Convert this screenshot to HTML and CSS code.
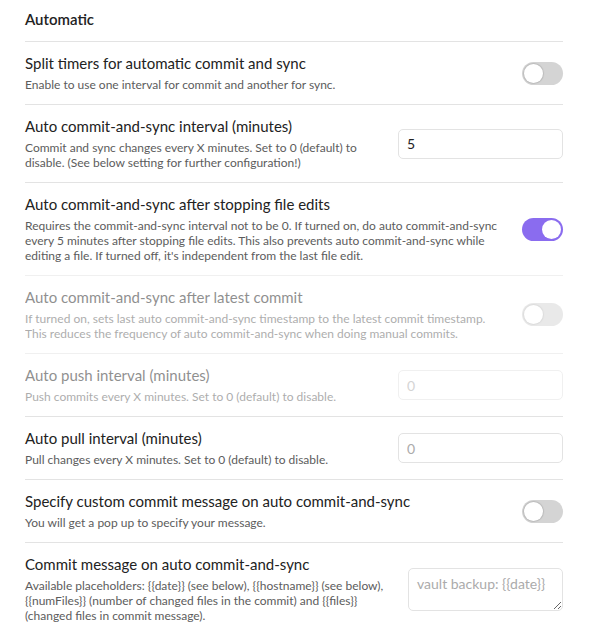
FILE: index.html
```html
<!DOCTYPE html>
<html>
<head>
<meta charset="utf-8">
<link rel="stylesheet" href="styles.css">
</head>
<body>
<div class="settings">
  <div class="setting-item heading">
    <div class="info"><div class="name">Automatic</div></div>
  </div>

  <div class="setting-item">
    <div class="info">
      <div class="name">Split timers for automatic commit and sync</div>
      <div class="desc">Enable to use one interval for commit and another for sync.</div>
    </div>
    <div class="control"><div class="toggle"></div></div>
  </div>

  <div class="setting-item">
    <div class="info">
      <div class="name">Auto commit-and-sync interval (minutes)</div>
      <div class="desc">Commit and sync changes every X minutes. Set to 0 (default) to disable. (See below setting for further configuration!)</div>
    </div>
    <div class="control"><input class="text-input" type="text" value="5"></div>
  </div>

  <div class="setting-item">
    <div class="info">
      <div class="name">Auto commit-and-sync after stopping file edits</div>
      <div class="desc">Requires the commit-and-sync interval not to be 0. If turned on, do auto commit-and-sync every 5 minutes after stopping file edits. This also prevents auto commit-and-sync while editing a file. If turned off, it's independent from the last file edit.</div>
    </div>
    <div class="control"><div class="toggle on"></div></div>
  </div>

  <div class="setting-item disabled">
    <div class="info">
      <div class="name">Auto commit-and-sync after latest commit</div>
      <div class="desc">If turned on, sets last auto commit-and-sync timestamp to the latest commit timestamp. This reduces the frequency of auto commit-and-sync when doing manual commits.</div>
    </div>
    <div class="control"><div class="toggle"></div></div>
  </div>

  <div class="setting-item disabled">
    <div class="info">
      <div class="name">Auto push interval (minutes)</div>
      <div class="desc">Push commits every X minutes. Set to 0 (default) to disable.</div>
    </div>
    <div class="control"><input class="text-input" type="text" placeholder="0" disabled></div>
  </div>

  <div class="setting-item">
    <div class="info">
      <div class="name">Auto pull interval (minutes)</div>
      <div class="desc">Pull changes every X minutes. Set to 0 (default) to disable.</div>
    </div>
    <div class="control"><input class="text-input" type="text" placeholder="0"></div>
  </div>

  <div class="setting-item">
    <div class="info">
      <div class="name">Specify custom commit message on auto commit-and-sync</div>
      <div class="desc">You will get a pop up to specify your message.</div>
    </div>
    <div class="control"><div class="toggle"></div></div>
  </div>

  <div class="setting-item">
    <div class="info">
      <div class="name">Commit message on auto commit-and-sync</div>
      <div class="desc">Available placeholders: {{date}} (see below), {{hostname}} (see below), {{numFiles}} (number of changed files in the commit) and {{files}} (changed files in commit message).</div>
    </div>
    <div class="control"><textarea class="text-area" placeholder="vault backup: {{date}}"></textarea></div>
  </div>
</div>
</body>
</html>
```

FILE: styles.css
```css
html, body {
  margin: 0;
  padding: 0;
  background: #ffffff;
}

body {
  font-family: "Lato", "Liberation Sans", sans-serif;
  color: #222222;
}

.settings {
  padding: 0 39px 0 25px;
}

.setting-item {
  display: flex;
  align-items: center;
  padding: 12px 0;
  border-top: 1px solid #e3e3e3;
}

.setting-item.heading {
  border-top: none;
  padding: 9px 0 12px;
}

.setting-item.heading .name {
  font-weight: 600;
  line-height: 20px;
}

.setting-item.disabled {
  opacity: 0.5;
}

.info {
  flex: 1 1 auto;
  margin-right: 16px;
}

.name {
  font-size: 15px;
  line-height: 19px;
  color: #222222;
}

.desc {
  font-size: 12px;
  line-height: 15px;
  padding-top: 4px;
  color: #5c5c5c;
}

.control {
  flex: 0 0 auto;
  display: flex;
  justify-content: flex-end;
}

.toggle {
  position: relative;
  width: 41px;
  height: 23px;
  border-radius: 12px;
  background: #d4d4d4;
}

.toggle::after {
  content: "";
  position: absolute;
  top: 2px;
  left: 2px;
  width: 19px;
  height: 19px;
  border-radius: 50%;
  background: #ffffff;
  box-shadow: 0 0 1px 1px rgba(0, 0, 0, 0.12);
}

.toggle.on {
  background: #8a6cef;
}

.toggle.on::after {
  left: 20px;
  box-shadow: none;
}

.text-input {
  box-sizing: border-box;
  width: 165px;
  height: 30px;
  padding: 0 8px;
  border: 1px solid #e3e3e3;
  border-radius: 5px;
  background: #ffffff;
  font-family: inherit;
  font-size: 14px;
  color: #222222;
  outline: none;
}

.text-input::placeholder {
  color: #ababab;
}

.text-area {
  box-sizing: border-box;
  width: 155px;
  height: 43px;
  padding: 6px 8px;
  border: 1px solid #e3e3e3;
  border-radius: 5px;
  background: #ffffff;
  font-family: inherit;
  font-size: 14px;
  color: #222222;
  outline: none;
  margin: 0;
  display: block;
}

.text-area::placeholder {
  color: #ababab;
}
```
